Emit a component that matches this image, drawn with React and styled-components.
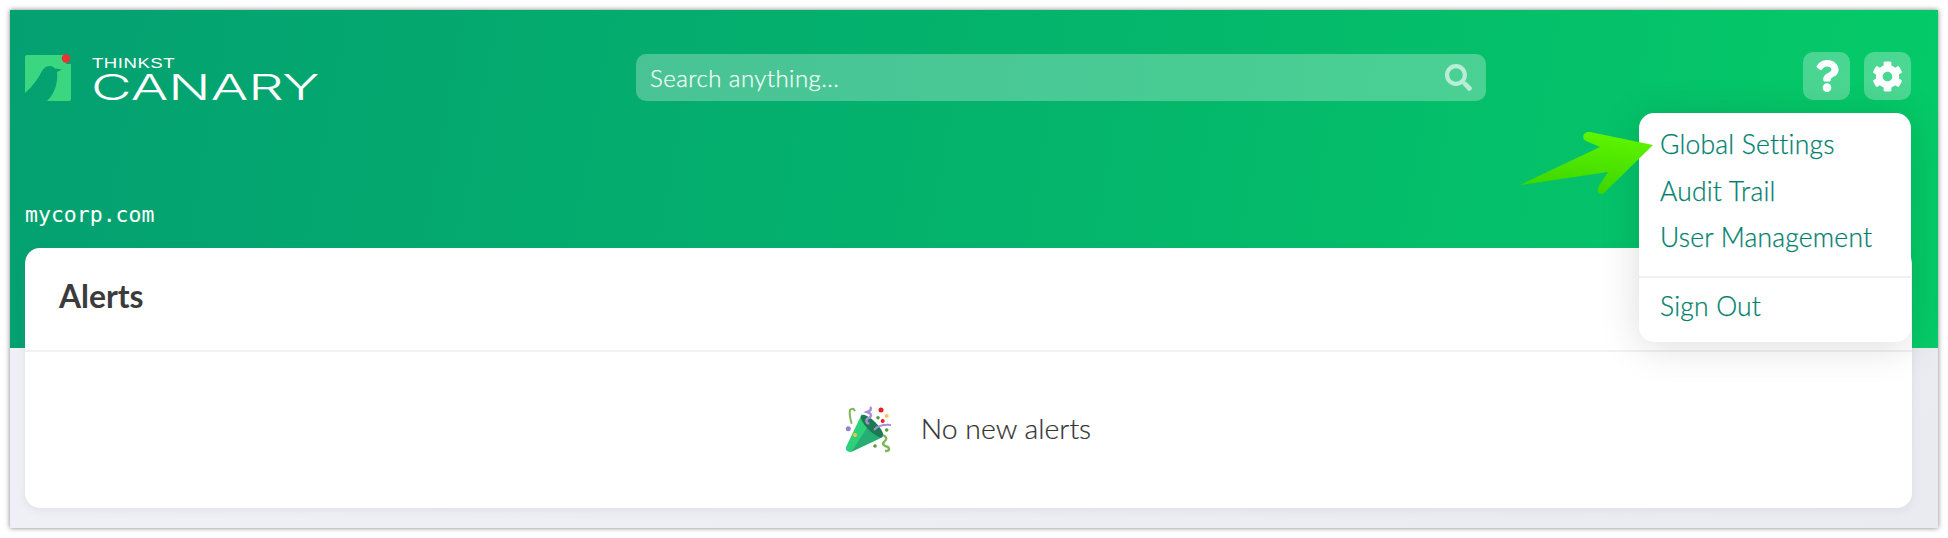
import React from "react";
import styled, { createGlobalStyle } from "styled-components";
import { FaCog, FaQuestion, FaSearch } from "react-icons/fa";

const GlobalStyle = createGlobalStyle`
  html, body {
    margin: 0;
    padding: 0;
    background: #fff;
  }
  body {
    font-family: "Lato", "Open Sans", sans-serif;
  }
`;

const Page = styled.div`
  width: 1948px;
  height: 538px;
  padding: 10px;
  box-sizing: border-box;
  overflow: hidden;
`;

const Window = styled.div`
  position: relative;
  width: 1928px;
  height: 518px;
  background:
    linear-gradient(100deg, #04a071 0%, #04b36c 50%, #05cb68 100%) top / 100% 338px no-repeat,
    linear-gradient(120deg, #f0f1f6, #e9ebf1);
  box-shadow: 0 0 5px rgba(0, 0, 0, 0.5);
`;

const TopBar = styled.header`
  display: flex;
  align-items: center;
  height: 48px;
  padding: 42px 27px 0 15px;
`;

const Logo = styled.div`
  display: flex;
  align-items: flex-start;
  gap: 21px;
  width: 611px;
  height: 46px;
  margin-top: 4px;
  flex: none;
`;

const LogoText = styled.div`
  display: flex;
  flex-direction: column;
  color: #fff;
`;

const LogoSmall = styled.span`
  font-family: "Liberation Sans", sans-serif;
  font-size: 15px;
  line-height: 15px;
  letter-spacing: 0.4px;
  display: inline-block;
  transform: scaleX(1.24);
  transform-origin: left center;
`;

const LogoLarge = styled.span`
  font-family: "Inter", sans-serif;
  font-weight: 300;
  font-size: 36px;
  line-height: 34px;
  margin-left: -1px;
  display: inline-block;
  transform: scaleX(1.55);
  transform-origin: left center;
`;

const Search = styled.div`
  display: flex;
  align-items: center;
  justify-content: space-between;
  width: 850px;
  height: 47px;
  margin-top: 2px;
  padding: 0 14px;
  box-sizing: border-box;
  border-radius: 10px;
  background: rgba(255, 255, 255, 0.28);
  color: rgba(255, 255, 255, 0.62);
  font-size: 24px;
`;

const Placeholder = styled.span`
  color: #f7fdfa;
  font-weight: 300;
  letter-spacing: 0.45px;
  -webkit-text-stroke: 0.25px currentColor;
`;

const Actions = styled.div`
  display: flex;
  gap: 14px;
  margin-left: auto;
`;

const IconButton = styled.button`
  display: flex;
  align-items: center;
  justify-content: center;
  width: 47px;
  height: 48px;
  padding: 0;
  border: 0;
  border-radius: 10px;
  background: rgba(255, 255, 255, 0.28);
  color: #fff;
  font-size: ${(p) => p.$size}px;
`;

const Domain = styled.div`
  margin: 100px 0 0 15px;
  height: 30px;
  line-height: 30px;
  font-family: "DejaVu Sans Mono", monospace;
  font-size: 21.5px;
  color: #fff;
`;

const Card = styled.section`
  margin: 18px 26px 0 15px;
  height: 260px;
  display: flex;
  flex-direction: column;
  background: #fff;
  border-radius: 15px;
  box-shadow: 0 2px 8px rgba(120, 125, 150, 0.12);
`;

const CardHead = styled.div`
  display: flex;
  align-items: center;
  height: 96px;
  padding: 0 0 6px 34px;
  border-bottom: 2px solid #f1f1f1;
  font-size: 31.8px;
  font-weight: 700;
  color: #3b3b3b;
`;

const CardBody = styled.div`
  flex: 1;
  display: flex;
  align-items: center;
  justify-content: center;
  gap: 29px;
  font-size: 28.4px;
  font-weight: 300;
  color: #333;
  -webkit-text-stroke: 0.2px currentColor;
`;

const AlertText = styled.span`
  margin-bottom: 4px;
`;

const Menu = styled.nav`
  position: absolute;
  top: 103px;
  right: 27px;
  width: 272px;
  height: 229px;
  padding-top: 8px;
  box-sizing: border-box;
  background: #fff;
  border-radius: 15px;
  box-shadow: 0 4px 40px rgba(0, 0, 0, 0.14);
`;

const MenuItem = styled.a`
  display: block;
  height: 46.5px;
  line-height: 46.5px;
  padding-left: 21px;
  font-size: 26.5px;
  font-weight: 300;
  letter-spacing: 0.2px;
  color: #007f6d;
  -webkit-text-stroke: 0.25px currentColor;
`;

const MenuDivider = styled.div`
  height: 2px;
  margin: 15px 0 5px;
  background: #f1f1f1;
`;

const Pointer = styled.svg`
  position: absolute;
  left: 1495px;
  top: 108px;
`;

function BirdLogo() {
  return (
    <svg width="46" height="46" viewBox="0 0 46 46" style={{ flex: "none", overflow: "visible" }}>
      <path
        fill="#3bd680"
        d="M2 0H41V9H46V44a2 2 0 0 1-2 2H22C30 38 33 28 32 17L37 14.5L30 13.5C26 9 20 11 17 16C13 24 7 32 0 38V2A2 2 0 0 1 2 0Z"
      />
      <circle cx="41" cy="3.5" r="4.2" fill="#f0312f" />
    </svg>
  );
}

function PartyPopper() {
  return (
    <svg width="46" height="46" viewBox="0 0 46 46" style={{ flex: "none", overflow: "visible" }}>
      <path fill="#2fd07a" d="M0 40 L15.7 7.3 L36.7 30 L5 45 Q-1 45 0 40Z" />
      <path fill="#24a772" d="M8 41 L24 16 L36.7 30 L5 45Z" opacity="0.85" />
      <ellipse cx="26" cy="19" rx="5" ry="15" transform="rotate(-45 26 19)" fill="#1b7a52" />
      <circle cx="9" cy="28" r="2" fill="#f5c24c" />
      <circle cx="2.3" cy="21.7" r="2.5" fill="#9a7fd6" />
      <path d="M5.7 16.7 Q3 8 4 3 Q7 0 9 4" fill="none" stroke="#7eb75a" strokeWidth="2" />
      <path d="M24 0 Q27 3 21 5 Q29 8 21 12 Q19 15 23 17" fill="none" stroke="#a98fd8" strokeWidth="2.5" />
      <path d="M28 23 Q33 17 45 18" fill="none" stroke="#a98fd8" strokeWidth="2" />
      <path d="M37 28 Q43 31 38 35 Q35 38 42 40 Q45 44 39 44" fill="none" stroke="#7eb75a" strokeWidth="2.5" />
      <circle cx="35" cy="3" r="2.5" fill="#ee1c25" />
      <circle cx="40.7" cy="9" r="2" fill="#f7c95c" />
      <circle cx="36.7" cy="14" r="2" fill="#ee1c25" />
      <circle cx="32" cy="10.7" r="1.8" fill="#5a9a3e" />
      <circle cx="40.7" cy="23" r="1.8" fill="#5a9a3e" />
      <circle cx="29" cy="39" r="1.8" fill="#5a9a3e" />
    </svg>
  );
}

function GreenArrow() {
  return (
    <Pointer width="150" height="90" viewBox="0 0 150 90">
      <defs>
        <linearGradient id="arrow" x1="0.6" y1="0" x2="0.4" y2="1">
          <stop offset="0" stopColor="#5ff500" />
          <stop offset="1" stopColor="#3bd400" />
        </linearGradient>
      </defs>
      <path
        fill="url(#arrow)"
        d="M148 27 L85 14 C78 13 76 21 81 23 L95 29 L15 67 L103 54 L94 68 C90 75 97 79 101 73 Z"
      />
    </Pointer>
  );
}

export default function App() {
  return (
    <>
      <GlobalStyle />
      <Page>
        <Window>
          <TopBar>
            <Logo>
              <BirdLogo />
              <LogoText>
                <LogoSmall>THINKST</LogoSmall>
                <LogoLarge>CANARY</LogoLarge>
              </LogoText>
            </Logo>
            <Search>
              <Placeholder>Search anything...</Placeholder>
              <FaSearch size={27} />
            </Search>
            <Actions>
              <IconButton $size={32}>
                <FaQuestion />
              </IconButton>
              <IconButton $size={31}>
                <FaCog />
              </IconButton>
            </Actions>
          </TopBar>
          <Domain>mycorp.com</Domain>
          <Card>
            <CardHead>Alerts</CardHead>
            <CardBody>
              <PartyPopper />
              <AlertText>No new alerts</AlertText>
            </CardBody>
          </Card>
          <Menu>
            <MenuItem>Global Settings</MenuItem>
            <MenuItem>Audit Trail</MenuItem>
            <MenuItem>User Management</MenuItem>
            <MenuDivider />
            <MenuItem>Sign Out</MenuItem>
          </Menu>
          <GreenArrow />
        </Window>
      </Page>
    </>
  );
}
